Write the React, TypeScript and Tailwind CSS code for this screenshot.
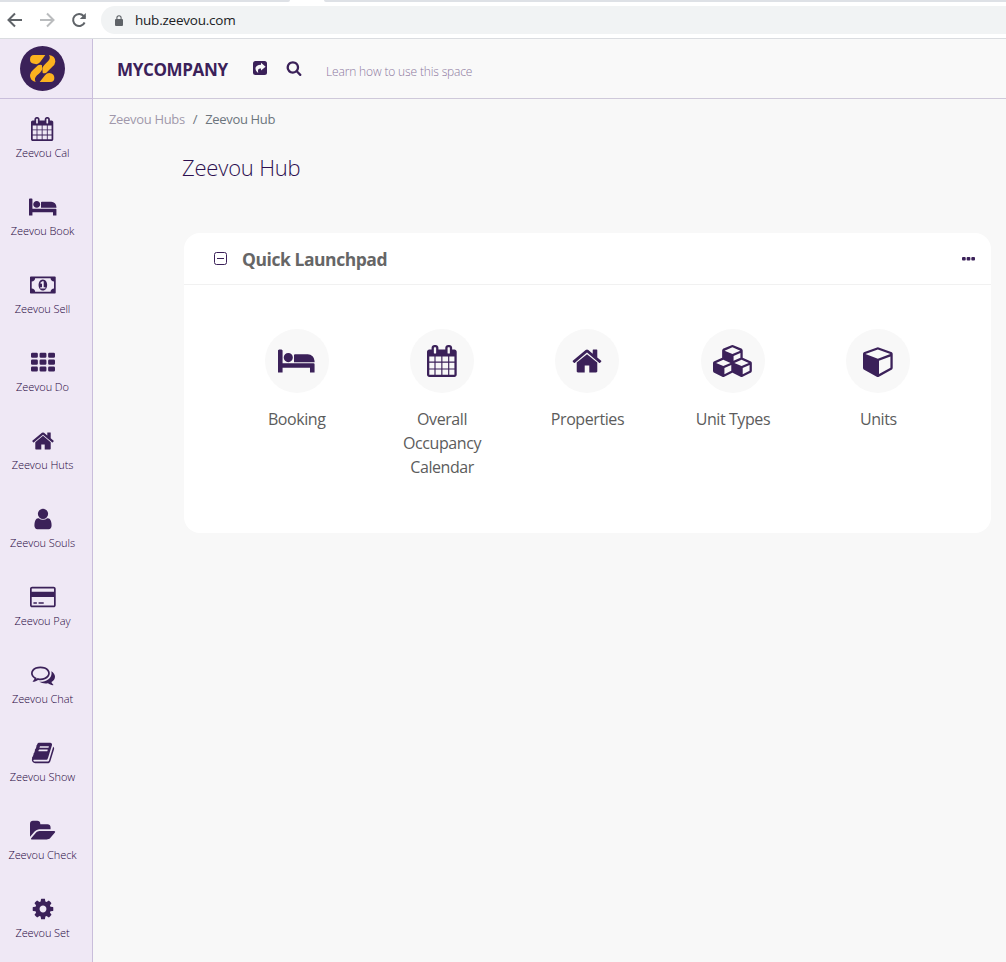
import React from "react";

type Glyph = { w: number; d: string };

const glyphs: Record<string, Glyph> = {
  calendar: { w: 1664, d: "M128 1664h288v-288h-288v288zm352 0h320v-288h-320v288zm-352-352h288v-320h-288v320zm352 0h320v-320h-320v320zm-352-384h288v-288h-288v288zm736 736h320v-288h-320v288zm-384-736h320v-288h-320v288zm768 736h288v-288h-288v288zm-384-352h320v-320h-320v320zm-352-864v-288q0-13-9.5-22.5t-22.5-9.5h-64q-13 0-22.5 9.5t-9.5 22.5v288q0 13 9.5 22.5t22.5 9.5h64q13 0 22.5-9.5t9.5-22.5zm736 864h288v-320h-288v320zm-384-384h320v-288h-320v288zm384 0h288v-288h-288v288zm32-480v-288q0-13-9.5-22.5t-22.5-9.5h-64q-13 0-22.5 9.5t-9.5 22.5v288q0 13 9.5 22.5t22.5 9.5h64q13 0 22.5-9.5t9.5-22.5zm384-64v1280q0 52-38 90t-90 38h-1408q-52 0-90-38t-38-90v-1280q0-52 38-90t90-38h128v-96q0-66 47-113t113-47h64q66 0 113 47t47 113v96h384v-96q0-66 47-113t113-47h64q66 0 113 47t47 113v96h128q52 0 90 38t38 90z" },
  bed: { w: 2048, d: "M256 1024h1728q26 0 45 19t19 45v448h-256v-256h-1536v256h-256v-1216q0-26 19-45t45-19h128q26 0 45 19t19 45v704zm576-320q0-106-75-181t-181-75-181 75-75 181 75 181 181 75 181-75 75-181zm1216 256v-64q0-159-112.5-271.5t-271.5-112.5h-704q-26 0-45 19t-19 45v384h1152z" },
  money: { w: 1920, d: "M768 1152h384v-96h-128v-448h-114l-148 137 77 80q42-37 55-57h2v288h-128v96zm512-256q0 70-21 142t-59.5 134-101.5 101-138 39-138-39-101.5-101-59.5-134-21-142 21-142 59.5-134 101.5-101 138-39 138 39 101.5 101 59.5 134 21 142zm512 256v-512q-106 0-181-75t-75-181h-1152q0 106-75 181t-181 75v512q106 0 181 75t75 181h1152q0-106 75-181t181-75zm128-832v1152q0 26-19 45t-45 19h-1792q-26 0-45-19t-19-45v-1152q0-26 19-45t45-19h1792q26 0 45 19t19 45z" },
  grid: { w: 1792, d: "M96 128h320q96 0 96 96v192q0 96-96 96h-320q-96 0-96-96v-192q0-96 96-96zm640 0h320q96 0 96 96v192q0 96-96 96h-320q-96 0-96-96v-192q0-96 96-96zm640 0h320q96 0 96 96v192q0 96-96 96h-320q-96 0-96-96v-192q0-96 96-96zM96 640h320q96 0 96 96v192q0 96-96 96h-320q-96 0-96-96v-192q0-96 96-96zm640 0h320q96 0 96 96v192q0 96-96 96h-320q-96 0-96-96v-192q0-96 96-96zm640 0h320q96 0 96 96v192q0 96-96 96h-320q-96 0-96-96v-192q0-96 96-96zM96 1152h320q96 0 96 96v192q0 96-96 96h-320q-96 0-96-96v-192q0-96 96-96zm640 0h320q96 0 96 96v192q0 96-96 96h-320q-96 0-96-96v-192q0-96 96-96zm640 0h320q96 0 96 96v192q0 96-96 96h-320q-96 0-96-96v-192q0-96 96-96z" },
  home: { w: 1792, d: "M1472 992v480q0 26-19 45t-45 19h-384v-384h-256v384h-384q-26 0-45-19t-19-45v-480q0-1 .5-3t.5-3l575-474 575 474q1 2 1 6zm223-69l-62 74q-8 9-21 11h-3q-13 0-21-7l-692-577-692 577q-12 8-24 7-13-2-21-11l-62-74q-8-10-7-23.5t11-21.5l719-599q32-26 76-26t76 26l244 204v-195q0-14 9-23t23-9h192q14 0 23 9t9 23v408l219 182q10 8 11 21.5t-7 23.5z" },
  user: { w: 1792, d: "M1536 1399q0 109-62.5 187t-150.5 78h-854q-88 0-150.5-78t-62.5-187q0-85 8.5-160.5t31.5-152 58.5-131 94-89 134.5-34.5q131 128 313 128t313-128q76 0 134.5 34.5t94 89 58.5 131 31.5 152 8.5 160.5zm-256-887q0 159-112.5 271.5t-271.5 112.5-271.5-112.5-112.5-271.5 112.5-271.5 271.5-112.5 271.5 112.5 112.5 271.5z" },
  card: { w: 1920, d: "M1760 128q66 0 113 47t47 113v1216q0 66-47 113t-113 47h-1600q-66 0-113-47t-47-113v-1216q0-66 47-113t113-47h1600zm-1600 128q-13 0-22.5 9.5t-9.5 22.5v224h1664v-224q0-13-9.5-22.5t-22.5-9.5h-1600zm1600 1280q13 0 22.5-9.5t9.5-22.5v-608h-1664v608q0 13 9.5 22.5t22.5 9.5h1600zm-1504-128v-128h256v128h-256zm384 0v-128h384v128h-384z" },
  chat: { w: 1792, d: "M704 384q-153 0-286 52t-211.5 141-78.5 191q0 82 53 158t149 132l97 56-35 84q34-20 62-39l44-31 53 10q78 14 153 14 153 0 286-52t211.5-141 78.5-191-78.5-191-211.5-141-286-52zm0-128q191 0 353.5 68.5t256.5 186.5 94 257-94 257-256.5 186.5-353.5 68.5q-86 0-176-16-124 88-278 128-36 9-86 16h-3q-11 0-20.5-8t-11.5-21q-1-3-1-6.5t.5-6.5 2-6l2.5-5 3.5-5.5 4-5 4.5-5 4-4.5q5-6 23-25t26-29.5 22.5-29 25-38.5 20.5-44q-124-72-195-177t-71-224q0-139 94-257t256.5-186.5 353.5-68.5zm822 1169q10 24 20.5 44t25 38.5 22.5 29 26 29.5 23 25q1 1 4 4.5t4.5 5 4 5 3.5 5.5l2.5 5 2 6 .5 6.5-1 6.5q-3 14-13 22t-22 7q-50-7-86-16-154-40-278-128-90 16-176 16-271 0-472-132 58 4 88 4 161 0 309-45t264-129q125-92 192-212t67-254q0-77-23-152 129 71 204 178t75 230q0 120-71 224.5t-195 176.5z" },
  book: { w: 1792, d: "M1703 478q40 57 18 129l-275 906q-19 64-76.5 107.5t-122.5 43.5h-923q-77 0-148.5-53.5t-99.5-131.5q-24-67-2-127 0-4 3-27t4-37q1-8-3-21.5t-3-19.5q2-11 8-21t16.5-23.5 16.5-23.5q23-38 45-91.5t30-91.5q3-10 .5-30t-.5-28q3-11 17-28t17-23q21-36 42-92t25-90q1-9-2.5-32t.5-28q4-13 22-30.5t22-22.5q19-26 42.5-84.5t27.5-96.5q1-8-3-25.5t-2-26.5q2-8 9-18t18-23 17-21q8-12 16.5-30.5t15-35 16-36 19.5-32 26.5-23.5 36-11.5 47.5 5.5l-1 3q38-9 51-9h761q74 0 114 56t18 130l-274 906q-36 119-71.5 153.5t-128.5 34.5h-869q-27 0-38 15-11 16-1 43 24 70 144 70h923q29 0 56-15.5t35-41.5l300-987q7-22 5-57 38 15 59 43zm-1064 2q-4 13 2 22.5t20 9.5h608q13 0 25.5-9.5t16.5-22.5l21-64q4-13-2-22.5t-20-9.5h-608q-13 0-25.5 9.5t-16.5 22.5zm-83 256q-4 13 2 22.5t20 9.5h608q13 0 25.5-9.5t16.5-22.5l21-64q4-13-2-22.5t-20-9.5h-608q-13 0-25.5 9.5t-16.5 22.5z" },
  folder: { w: 1920, d: "M1879 952q0 31-31 66l-336 396q-43 51-120.5 86.5t-143.5 35.5h-1088q-34 0-60.5-13t-26.5-43q0-31 31-66l336-396q43-51 120.5-86.5t143.5-35.5h1088q34 0 60.5 13t26.5 43zm-343-344v160h-832q-94 0-197 47.5t-164 119.5l-337 396-5 6q0-4-.5-12.5t-.5-12.5v-960q0-92 66-158t158-66h320q92 0 158 66t66 158v32h544q92 0 158 66t66 158z" },
  cog: { w: 1792, d: "M1152 896q0-106-75-181t-181-75-181 75-75 181 75 181 181 75 181-75 75-181zm512-109v222q0 12-8 23t-20 13l-185 28q-19 54-39 91 35 50 107 138 10 12 10 25t-9 23q-27 37-99 108t-94 71q-12 0-26-9l-138-108q-44 23-91 38-16 136-29 186-7 28-36 28h-222q-14 0-24.5-8.5t-11.5-21.5l-28-184q-49-16-90-37l-141 107q-10 9-25 9-14 0-25-11-126-114-165-168-7-10-7-23 0-12 8-23 15-21 51-66.5t54-70.5q-27-50-41-99l-183-27q-13-2-21-12.5t-8-23.5v-222q0-12 8-23t19-13l186-28q14-46 39-92-40-57-107-138-10-12-10-24 0-10 9-23 26-36 98.5-107.5t94.5-71.5q13 0 26 10l138 107q44-23 91-38 16-136 29-186 7-28 36-28h222q14 0 24.5 8.5t11.5 21.5l28 184q49 16 90 37l142-107q9-9 24-9 13 0 25 10 129 119 165 170 7 8 7 22 0 12-8 23-15 21-51 66.5t-54 70.5q26 50 41 98l183 28q13 2 21 12.5t8 23.5z" },
  search: { w: 1792, d: "M1216 832q0-185-131.5-316.5t-316.5-131.5-316.5 131.5-131.5 316.5 131.5 316.5 316.5 131.5 316.5-131.5 131.5-316.5zm512 832q0 52-38 90t-90 38q-54 0-90-38l-343-342q-179 124-399 124-143 0-273.5-55.5t-225-150-150-225-55.5-273.5 55.5-273.5 150-225 225-150 273.5-55.5 273.5 55.5 225 150 150 225 55.5 273.5q0 220-124 399l343 343q37 37 37 90z" },
  cube: { w: 1664, d: "M896 1629l640-349v-636l-640 233v752zm-64-865l698-254-698-254-698 254zm832-252v768q0 35-18 65t-49 47l-704 384q-28 16-61 16t-61-16l-704-384q-31-17-49-47t-18-65v-768q0-40 23-73t61-47l704-256q22-8 44-8t44 8l704 256q38 14 61 47t23 73z" },
  cubes: { w: 2176, d: "M640 1632l384-192v-314l-384 164v342zm-64-454l404-173-404-173-404 173zm1088 454l384-192v-314l-384 164v342zm-64-454l404-173-404-173-404 173zm-448-293l384-165v-266l-384 164v267zm-64-379l441-189-441-189-441 189zm1088 518v416q0 36-19 67t-52 47l-448 224q-25 14-57 14t-57-14l-448-224q-4-2-7-4-2 2-7 4l-448 224q-25 14-57 14t-57-14l-448-224q-33-16-52-47t-19-67v-416q0-38 21.5-70t56.5-48l434-186v-400q0-38 21.5-70t56.5-48l448-192q23-10 50-10t50 10l448 192q35 16 56.5 48t21.5 70v400l434 186q36 16 57 48t21 70z" },
};

function Icon({ name, className }: { name: string; className: string }) {
  const g = glyphs[name];
  return (
    <svg viewBox={`0 0 ${g.w} 1792`} className={`w-auto shrink-0 overflow-visible fill-[#3b2159] ${className}`}>
      <path d={g.d} />
    </svg>
  );
}

const nav = [
  ["calendar", "Zeevou Cal"],
  ["bed", "Zeevou Book"],
  ["money", "Zeevou Sell"],
  ["grid", "Zeevou Do"],
  ["home", "Zeevou Huts"],
  ["user", "Zeevou Souls"],
  ["card", "Zeevou Pay"],
  ["chat", "Zeevou Chat"],
  ["book", "Zeevou Show"],
  ["folder", "Zeevou Check"],
  ["cog", "Zeevou Set"],
];

const tiles = [
  ["bed", "Booking"],
  ["calendar", "Overall Occupancy Calendar"],
  ["home", "Properties"],
  ["cubes", "Unit Types"],
  ["cube", "Units"],
];

function BrowserBar() {
  return (
    <div className="h-[39px] shrink-0 border-b border-[#dadce0] bg-white">
      <div className="flex h-[2px] justify-between">
        <div className="w-[290px] rounded-br-lg bg-[#dee1e6]" />
        <div className="w-[682px] rounded-bl-lg bg-[#dee1e6]" />
      </div>
      <div className="flex h-[36px] items-center pl-[7px]">
        <svg viewBox="0 0 16 16" className="size-4 fill-none stroke-[#5f6368] stroke-2"><path d="M15 8H2M8 1.5L1.5 8L8 14.5" /></svg>
        <svg viewBox="0 0 16 16" className="ml-4 size-4 fill-none stroke-[#babcbe] stroke-2"><path d="M1 8h13M8 1.5L14.5 8L8 14.5" /></svg>
        <svg viewBox="0 0 16 16" className="ml-4 size-4 fill-none stroke-[#5f6368] stroke-2"><path d="M13.6 10.5A6 6 0 1 1 12.6 4L14 5.5" /><path d="M14.8 1v6h-6z" className="fill-[#5f6368] stroke-none" /></svg>
        <div className="ml-[14px] flex h-7 flex-1 items-center rounded-l-full bg-[#f1f3f4] pl-[14px]">
          <svg viewBox="0 0 8 11" className="h-[11px] w-2"><rect y="4" width="8" height="7" rx="1" fill="#5f6368" /><path d="M1.9 4.5V2.8a2.1 2.1 0 0 1 4.2 0v1.7" fill="none" stroke="#5f6368" strokeWidth="1.1" /></svg>
          <span className="ml-3 text-[13.5px] tracking-[-0.22px] text-[#202124]">hub.zeevou.com</span>
        </div>
      </div>
    </div>
  );
}

function Logo() {
  return (
    <svg viewBox="0 0 135 135" className="size-[45px]">
      <circle cx="67.500" cy="67.500" r="67.500" fill="#3b2159" />
      <g fill="#fbb21f">
        <path d="M42 27H76L60 49Q54 56 46 54Q30 52 30 41Q30 27 42 27Z" />
        <path d="M87 27Q106 29 106 47Q105 56 97 62L79 80Q71 84 68 80L67 66Q69 60 84 46Q93 37 87 27Z" />
        <path d="M47 108Q29 103 30 87Q31 78 39 72L54 58Q62 54 66 58V71Q64 77 51 88Q41 98 47 108Z" />
        <path d="M59 108L75 88Q80 81 88 81Q103 82 103 96Q103 108 91 108Z" />
      </g>
    </svg>
  );
}

export default function App() {
  return (
    <div className="flex h-[962px] w-[1006px] flex-col overflow-hidden bg-[#f8f8f8] font-['Open_Sans','Noto_Sans',sans-serif]">
      <BrowserBar />
      <div className="flex min-h-0 flex-1">
        <aside className="w-[93px] shrink-0 border-r border-[#c9bedb] bg-[#efe8f5]">
          <div className="flex h-[60px] items-center justify-center border-b border-[#c9bedb] pr-[7px]">
            <Logo />
          </div>
          <nav className="flex flex-col pr-[7px] pt-[18px]">
            {nav.map(([icon, label]) => (
              <div key={label} className="flex h-[78px] flex-col items-center">
                <Icon name={icon} className="h-6" />
                <span className="mt-1 whitespace-nowrap text-[11px] font-light leading-4 tracking-[-0.08px] text-[#1f0540]">{label}</span>
              </div>
            ))}
          </nav>
        </aside>
        <main className="flex-1">
          <header className="flex h-[60px] items-center border-b border-[#cfc9da] bg-[#f9f9f9] pl-6">
            <span className="mt-[2px] w-[111px] whitespace-nowrap text-[17px] font-bold tracking-[-0.35px] text-[#3b2159]">MYCOMPANY</span>
            <svg viewBox="0 0 14 14" className="ml-[25px] mt-[-1px] size-[14px]">
              <rect width="14" height="14" rx="2.500" fill="#3b2159" />
              <path d="M8 1.700L12.600 5.700L8 9.500V7.500C5.300 7.300 4.600 8.500 5.200 12C1.200 9 1.200 4 8 3.800Z" fill="#f9f9f9" />
            </svg>
            <Icon name="search" className="ml-[19px] mt-[-1px] h-4" />
            <span className="ml-6 mt-[6px] text-[12px] font-light tracking-[-0.15px] text-[#8c789e]">Learn how to use this space</span>
          </header>
          <div className="flex h-[41px] items-center gap-2 pl-4 text-[13px] tracking-[-0.33px]">
            <span className="text-[#a198ab]">Zeevou Hubs</span>
            <span className="text-[#6c757d]">/</span>
            <span className="text-[#6c757d]">Zeevou Hub</span>
          </div>
          <h1 className="mt-[9px] pl-[89px] text-[22px] font-light leading-[36px] tracking-[-0.2px] text-[#2d1050]">Zeevou Hub</h1>
          <section className="ml-[91px] mt-[48px] h-[300px] w-[807px] rounded-2xl bg-white">
            <div className="flex h-[52px] items-center border-b border-[#f1f1f1] pl-[30px] pr-4">
              <svg viewBox="0 0 13 13" className="size-[13px] fill-none stroke-[#3b2159]"><rect x=".5" y=".5" width="12" height="12" rx="2" /><path d="M3 6.500h7" /></svg>
              <span className="ml-[15px] mt-[2px] flex-1 text-[17.5px] font-bold tracking-[-0.45px] text-[#666]">Quick Launchpad</span>
              <svg viewBox="0 0 13 4" className="h-1 w-[13px] fill-[#3b2159]"><rect width="3.700" height="3.500" rx="1" /><rect x="4.650" width="3.700" height="3.500" rx="1" /><rect x="9.300" width="3.700" height="3.500" rx="1" /></svg>
            </div>
            <div className="grid grid-cols-5 pl-[40px] pr-[40px] pt-11">
              {tiles.map(([icon, label]) => (
                <div key={label} className="flex flex-col items-center">
                  <div className="flex size-16 items-center justify-center rounded-full bg-[#f8f8f8] pb-px">
                    <Icon name={icon} className="h-8" />
                  </div>
                  <span className="mt-[14px] w-[100px] text-center text-[16px] leading-6 tracking-[-0.42px] text-[#5c5c5c]">{label}</span>
                </div>
              ))}
            </div>
          </section>
        </main>
      </div>
    </div>
  );
}
